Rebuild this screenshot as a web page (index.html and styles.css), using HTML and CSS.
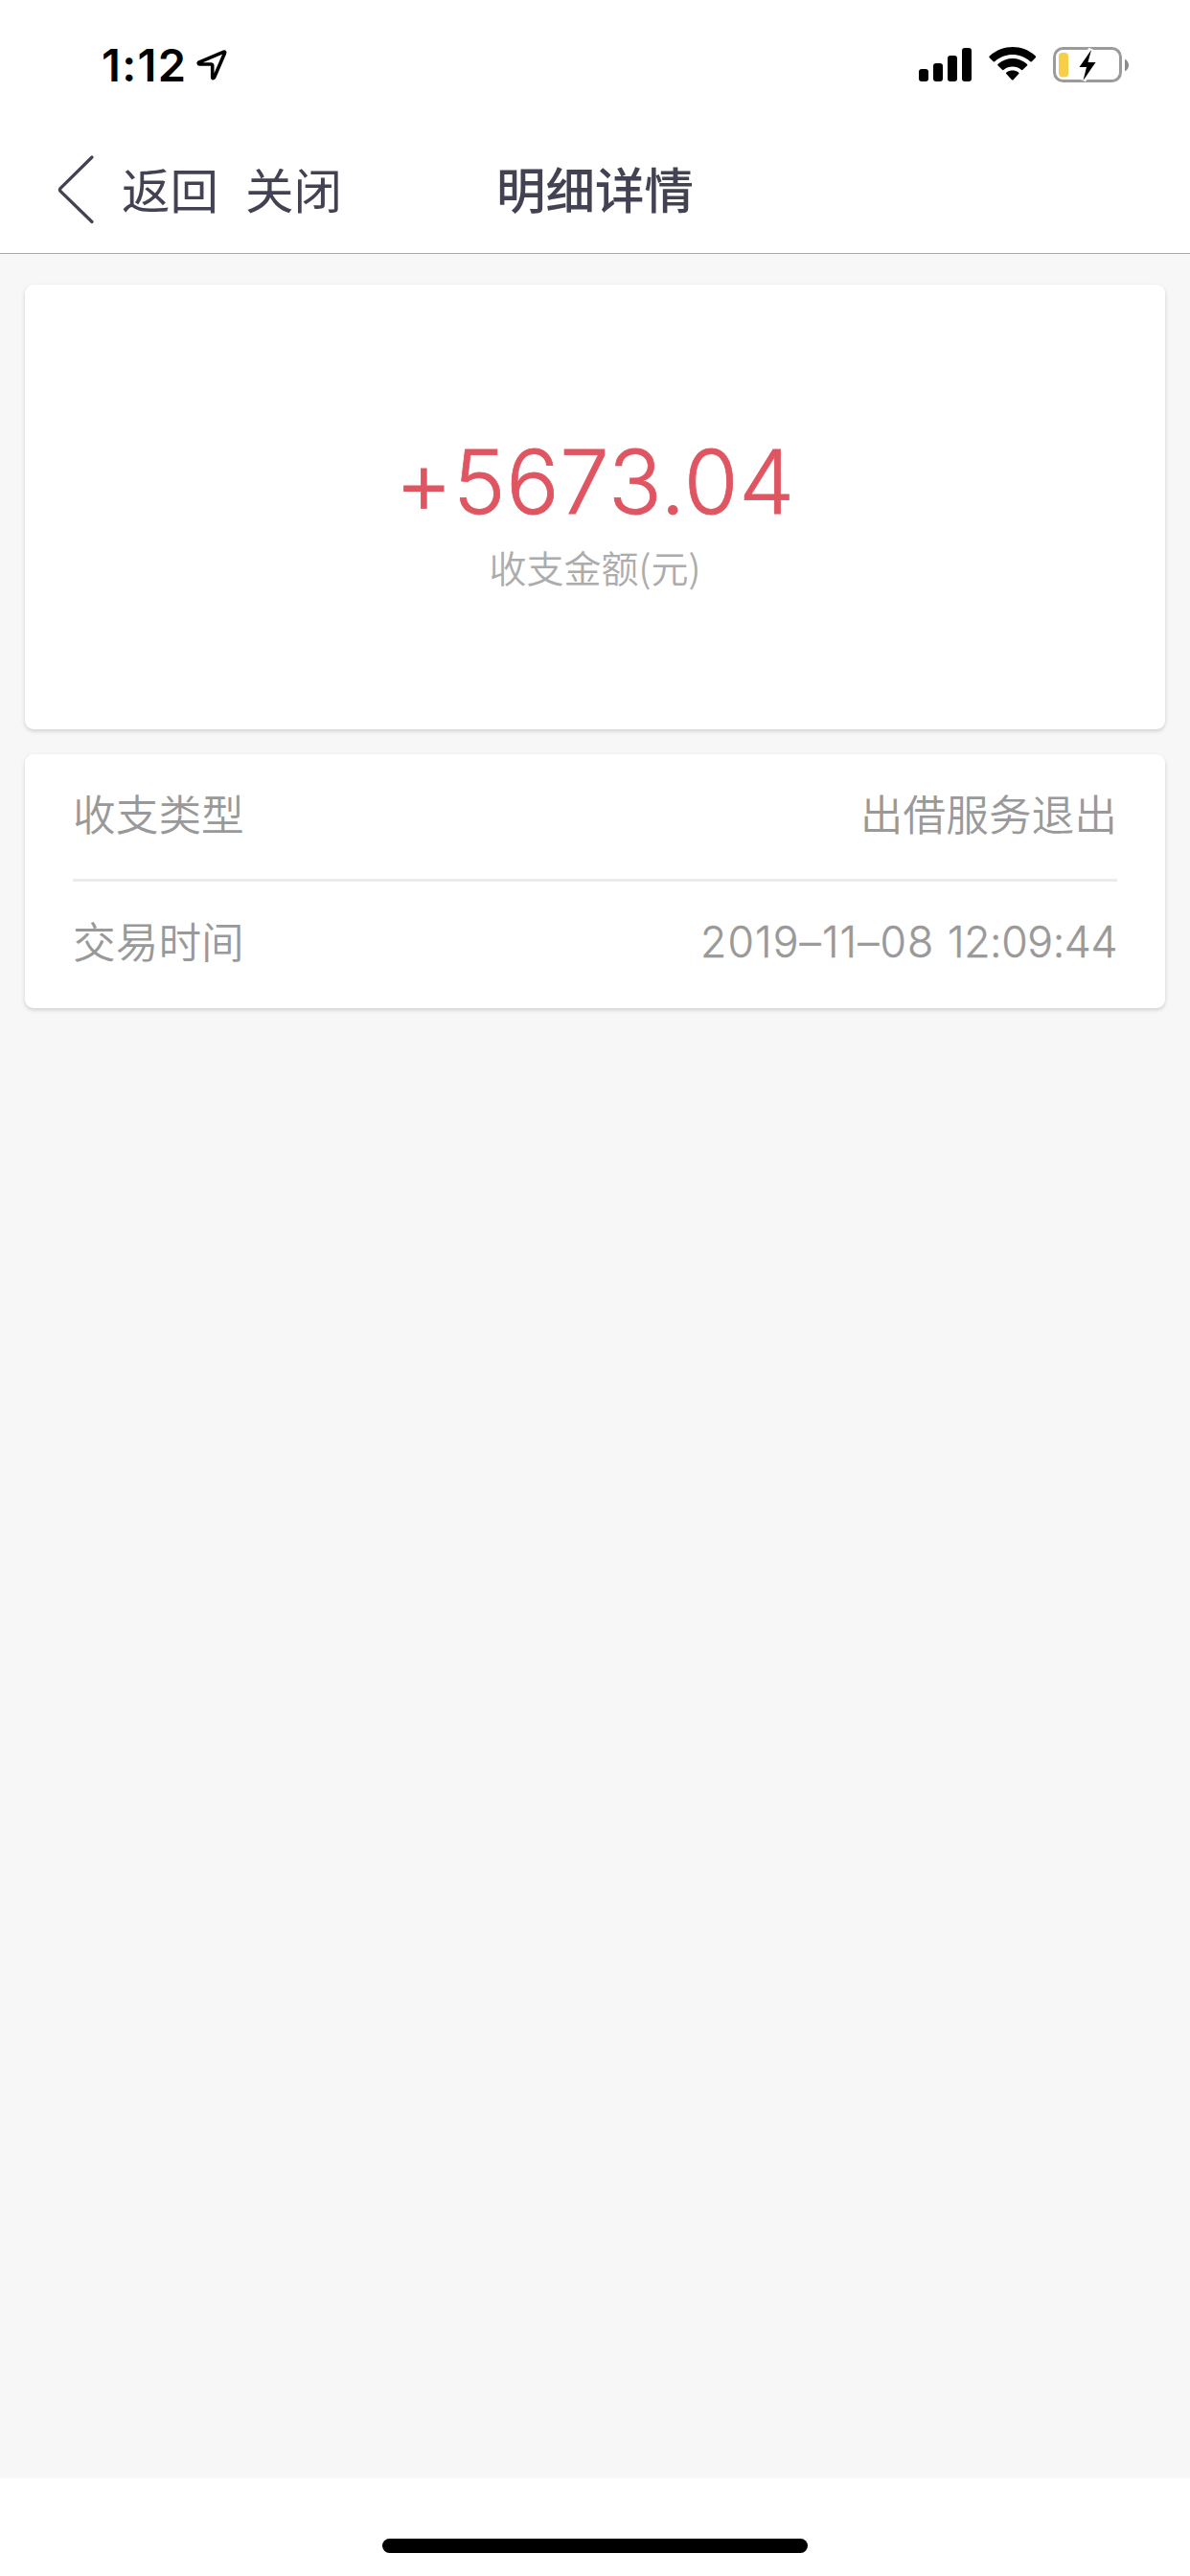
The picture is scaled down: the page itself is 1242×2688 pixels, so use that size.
FILE: index.html
```html
<!DOCTYPE html>
<html lang="zh-CN">
<head>
<meta charset="utf-8">
<title>明细详情</title>
<link rel="stylesheet" href="styles.css">
</head>
<body>
<div class="screen">
  <header class="header">
    <div class="status">
      <div class="status-left">
        <span class="time">1:12</span>
        <svg class="location" width="34" height="34" viewBox="0 0 34 34"><path d="M3.5 15.2 29.5 4.2Q31.2 3.8 30.5 5.5L19.5 31Q18.3 32.5 17.7 31V18.2Q17.5 17 16.3 17H4.5Q2.5 16.5 3.5 15.2Z" fill="none" stroke="#000" stroke-width="3.6" stroke-linejoin="round"/></svg>
      </div>
      <div class="status-right">
        <svg width="56" height="36" viewBox="0 0 56 36"><rect x="0" y="22" width="10" height="13" rx="3"/><rect x="15" y="16" width="10" height="19" rx="3"/><rect x="30" y="8" width="10" height="27" rx="3"/><rect x="45" y="0" width="10" height="35" rx="3"/></svg>
        <svg class="wifi" width="50" height="36" viewBox="0 0 50 36"><path d="M.5 11Q0 10 1 9.2C15-3 35-3 48.600 9.200Q49.600 10 49 11L44.800 15.200Q44 15.800 43 15C32.500 5.700 17 5.700 6.500 15Q5.500 15.800 4.700 15.200Z"/><path d="M9.300 19.200Q8.800 18.500 9.700 17.700C18.500 10.200 31 10.200 39.800 17.700Q40.700 18.500 40.200 19.200L35.500 23.800Q34.700 24.500 33.800 23.700C28.500 19.300 21 19.300 15.700 23.700Q14.800 24.500 14 23.800Z"/><path d="M18 27.800Q17.500 27 18.500 26.400C22.500 23.800 27 23.800 31 26.400Q32 27 31.500 27.800L25.600 34.200Q24.700 35 23.900 34.200Z"/></svg>
        <svg class="battery" width="80" height="40" viewBox="0 0 80 40"><rect x="1.500" y="2.500" width="69" height="34" rx="9" fill="none" stroke="#9b9b9b" stroke-width="3"/><path d="M75 13.500Q79 16 79 20T75 26.500Z" fill="#8c8c8c"/><rect x="6" y="7" width="10" height="25.500" rx="4" fill="#f7cf46"/><path d="M40 3.500 27.500 22H35L31.500 35.500 44.500 17H36.500Z" fill="#fff" stroke="#fff" stroke-width="6"/><path d="M40 4 27.500 22H35L31.500 36 44.500 17H36.500Z"/></svg>
      </div>
    </div>
    <nav class="nav">
      <div class="nav-left">
        <svg width="40" height="74" viewBox="0 0 40 74"><path d="M36 3 3 35.500Q1.800 37 3 38.500L36 70.500" fill="none" stroke="#434253" stroke-width="3.200" stroke-linecap="round"/></svg>
        <span class="back">返回</span>
        <span class="close">关闭</span>
      </div>
      <h1 class="title">明细详情</h1>
      <div></div>
    </nav>
  </header>
  <main class="content">
    <section class="card summary">
      <div class="amount">+5673.04</div>
      <div class="caption">收支金额(元)</div>
    </section>
    <section class="card details">
      <div class="row"><span>收支类型</span><span>出借服务退出</span></div>
      <div class="row"><span>交易时间</span><span class="date">2019–11–08 <span class="clock">12:09:44</span></span></div>
    </section>
  </main>
  <footer class="footer"><div class="home-bar"></div></footer>
</div>
</body>
</html>
```
FILE: styles.css
```css
* { box-sizing: border-box; }

body {
  margin: 0;
  background: #f7f7f7;
  font-family: Inter, "Noto Sans CJK SC", sans-serif;
}

.screen {
  display: flex;
  flex-direction: column;
  width: 1242px;
  height: 2688px;
}

.header {
  height: 265px;
  background: #fff;
  border-bottom: 1px solid #a9a9a9;
}

.status {
  display: flex;
  justify-content: space-between;
  height: 132px;
  padding: 0 63px 0 106px;
}

.status-left { display: flex; padding-top: 38px; }

.time {
  font-size: 47px;
  font-weight: 600;
  line-height: 60px;
  letter-spacing: 1.3px;
}

.location { margin: 12px 0 0 9px; }

.status-right { display: flex; padding-top: 50px; }
.wifi { margin: -1px 0 0 17px; }
.battery { margin: -2px 0 0 17px; }

.nav {
  display: grid;
  grid-template-columns: 1fr auto 1fr;
  align-items: center;
  height: 132px;
  color: #434253;
  font-family: "Noto Sans CJK SC", sans-serif;
}

.nav-left { display: flex; align-items: center; padding-left: 60px; }
.back, .close { font-size: 50.5px; line-height: 74px; padding-bottom: 4px; }
.back { margin-left: 27px; }
.close { margin-left: 28px; }

.title {
  margin: 0;
  padding-bottom: 5px;
  font-size: 51.5px;
  font-weight: 500;
  line-height: 74px;
}

.content { flex: 1; padding: 32px 26px 0; }

.card {
  border-radius: 9px;
  background: #fff;
  box-shadow: 0 2px 4px rgba(0, 0, 0, .16);
}

.summary {
  height: 464px;
  padding-top: 150px;
  text-align: center;
}

.amount {
  color: #df5662;
  font-size: 92px;
  font-weight: 300;
  font-feature-settings: "calt" 0;
  line-height: 112px;
  letter-spacing: .7px;
  -webkit-text-stroke: .8px #df5662;
}

.caption {
  color: #acacac;
  font-family: "Noto Sans CJK SC", sans-serif;
  font-size: 39px;
  font-weight: 350;
  line-height: 60px;
  margin-top: 2px;
}

.details { height: 265px; margin-top: 26px; padding: 0 50px; }

.row {
  display: flex;
  justify-content: space-between;
  height: 132px;
  color: #999;
  font-family: "Noto Sans CJK SC", sans-serif;
  font-size: 44.7px;
  font-weight: 350;
  line-height: 121px;
}

.row + .row { border-top: 3px solid #ebebeb; }
.row:first-child { height: 130px; }

.date {
  font-family: Inter, sans-serif;
  font-size: 44.5px;
  font-weight: 300;
  font-feature-settings: "calt" 0;
  letter-spacing: 1.1px;
  line-height: 126px;
  -webkit-text-stroke: .4px #999;
}

.clock { letter-spacing: -.4px; }

.footer {
  display: flex;
  justify-content: center;
  height: 102px;
  padding-top: 63px;
  background: #fff;
}

.home-bar { width: 444px; height: 15px; border-radius: 8px; background: #000; }
```
